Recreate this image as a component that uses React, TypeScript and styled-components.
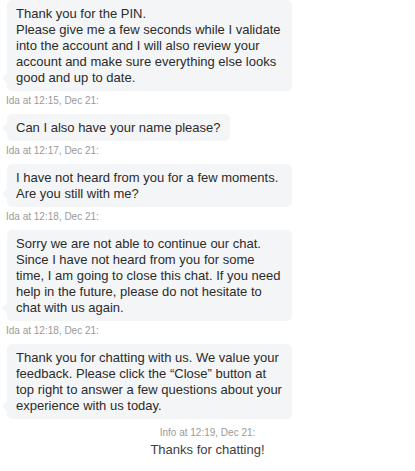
import React from "react";
import styled, { createGlobalStyle } from "styled-components";

const GlobalStyle = createGlobalStyle`
  html, body {
    margin: 0;
    padding: 0;
    background: #ffffff;
  }
  body {
    font-family: "Liberation Sans", Arial, Helvetica, sans-serif;
  }
`;

const StyledTranscript = styled.div`
  display: flex;
  flex-direction: column;
  width: 415px;
  height: 471px;
  overflow: hidden;
  padding: 0 0 0 7px;
  box-sizing: border-box;
`;

const StyledMessage = styled.div<{ $first?: boolean }>`
  display: flex;
  flex-direction: column;
  align-items: flex-start;
  margin-top: ${(p) => (p.$first ? "0" : "3px")};
`;

const StyledMeta = styled.div`
  font-size: 10px;
  line-height: 13px;
  color: #9a9a9a;
  margin-bottom: 7px;
  margin-left: -1px;
`;

const StyledBubble = styled.div`
  position: relative;
  max-width: 285px;
  box-sizing: border-box;
  padding: 5.5px 9px;
  background: #f4f5f7;
  border-radius: 5px;
  font-size: 13px;
  line-height: 16px;
  color: #2b2b2b;

  &::before {
    content: "";
    position: absolute;
    left: -5px;
    bottom: 8px;
    border-top: 5px solid transparent;
    border-bottom: 5px solid transparent;
    border-right: 5px solid #f4f5f7;
  }
`;

const StyledSystem = styled.div`
  display: flex;
  flex-direction: column;
  align-items: center;
  margin-top: 7px;
  margin-left: -7px;
`;

const StyledSystemMeta = styled(StyledMeta)`
  margin: 0 0 3px 0;
`;

const StyledSystemText = styled.div`
  font-size: 13px;
  line-height: 16px;
  color: #3d3d3d;
`;

const messages = [
  {
    meta: null,
    lines: [
      "Thank you for the PIN.",
      "Please give me a few seconds while I validate into the account and I will also review your account and make sure everything else looks good and up to date.",
    ],
  },
  {
    meta: "Ida at 12:15, Dec 21:",
    lines: ["Can I also have your name please?"],
  },
  {
    meta: "Ida at 12:17, Dec 21:",
    lines: ["I have not heard from you for a few moments. Are you still with me?"],
  },
  {
    meta: "Ida at 12:18, Dec 21:",
    lines: [
      "Sorry we are not able to continue our chat. Since I have not heard from you for some time, I am going to close this chat. If you need help in the future, please do not hesitate to chat with us again.",
    ],
  },
  {
    meta: "Ida at 12:18, Dec 21:",
    lines: [
      "Thank you for chatting with us. We value your feedback. Please click the \u201CClose\u201D button at top right to answer a few questions about your experience with us today.",
    ],
  },
];

const App = () => {
  return (
    <>
      <GlobalStyle />
      <StyledTranscript>
        {messages.map((msg, i) => (
          <StyledMessage key={i} $first={i === 0}>
            {msg.meta && <StyledMeta>{msg.meta}</StyledMeta>}
            <StyledBubble>
              {msg.lines.map((line, j) => (
                <div key={j}>{line}</div>
              ))}
            </StyledBubble>
          </StyledMessage>
        ))}
        <StyledSystem>
          <StyledSystemMeta>Info at 12:19, Dec 21:</StyledSystemMeta>
          <StyledSystemText>Thanks for chatting!</StyledSystemText>
        </StyledSystem>
      </StyledTranscript>
    </>
  );
};

export default App;
